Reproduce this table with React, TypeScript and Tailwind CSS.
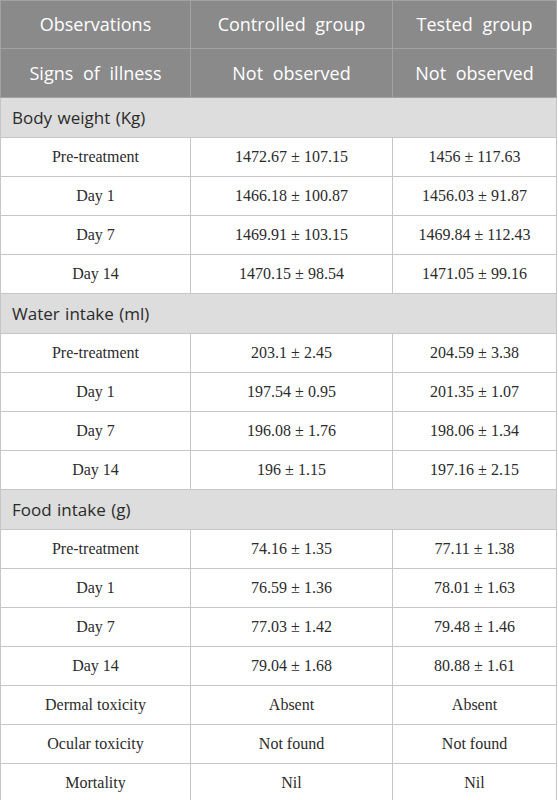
import React from "react";

type Row = { label: string; c: string; t: string };
type Section = { title: string; rows: Row[] };

const sections: Section[] = [
  {
    title: "Body weight (Kg)",
    rows: [
      { label: "Pre-treatment", c: "1472.67 ± 107.15", t: "1456 ± 117.63" },
      { label: "Day 1", c: "1466.18 ± 100.87", t: "1456.03 ± 91.87" },
      { label: "Day 7", c: "1469.91 ± 103.15", t: "1469.84 ± 112.43" },
      { label: "Day 14", c: "1470.15 ± 98.54", t: "1471.05 ± 99.16" },
    ],
  },
  {
    title: "Water intake (ml)",
    rows: [
      { label: "Pre-treatment", c: "203.1 ± 2.45", t: "204.59 ± 3.38" },
      { label: "Day 1", c: "197.54 ± 0.95", t: "201.35 ± 1.07" },
      { label: "Day 7", c: "196.08 ± 1.76", t: "198.06 ± 1.34" },
      { label: "Day 14", c: "196 ± 1.15", t: "197.16 ± 2.15" },
    ],
  },
  {
    title: "Food intake (g)",
    rows: [
      { label: "Pre-treatment", c: "74.16 ± 1.35", t: "77.11 ± 1.38" },
      { label: "Day 1", c: "76.59 ± 1.36", t: "78.01 ± 1.63" },
      { label: "Day 7", c: "77.03 ± 1.42", t: "79.48 ± 1.46" },
      { label: "Day 14", c: "79.04 ± 1.68", t: "80.88 ± 1.61" },
    ],
  },
];

const tail: Row[] = [
  { label: "Dermal toxicity", c: "Absent", t: "Absent" },
  { label: "Ocular toxicity", c: "Not found", t: "Not found" },
  { label: "Mortality", c: "Nil", t: "Nil" },
];

const sans = "font-['Open_Sans',sans-serif]";
const serif = "font-['Liberation_Serif',serif]";

function DataRow({ r }: { r: Row }) {
  const td =
    "border border-[#c6c6c6] h-[39px] p-0 text-center align-middle text-[16px] text-[#2b2b2b] " +
    serif;
  return (
    <tr>
      <td className={td}>{r.label}</td>
      <td className={td}>{r.c}</td>
      <td className={td}>{r.t}</td>
    </tr>
  );
}

export default function App() {
  const th =
    "border border-[#a2a2a2] h-[48px] p-0 text-center align-middle font-normal text-[18px] [word-spacing:5px] text-white bg-[#8a8a8a] " +
    sans;
  return (
    <div className="w-[558px] h-[800px] bg-white">
      <table className="w-[556px] border-collapse table-fixed">
        <colgroup>
          <col className="w-[190px]" />
          <col className="w-[202px]" />
          <col className="w-[164px]" />
        </colgroup>
        <thead>
          <tr>
            <th className={th}>Observations</th>
            <th className={th}>Controlled group</th>
            <th className={th}>Tested group</th>
          </tr>
          <tr>
            <th className={th + " h-[49px]"}>Signs of illness</th>
            <th className={th + " h-[49px]"}>Not observed</th>
            <th className={th + " h-[49px]"}>Not observed</th>
          </tr>
        </thead>
        <tbody>
          {sections.map((s) => (
            <React.Fragment key={s.title}>
              <tr>
                <td
                  colSpan={3}
                  className={
                    "border border-[#c6c6c6] h-[40px] p-0 pl-[11px] text-left align-middle bg-[#dcdddc] text-[17px] [word-spacing:1px] text-[#2b2b2b] " +
                    sans
                  }
                >
                  {s.title}
                </td>
              </tr>
              {s.rows.map((r) => (
                <DataRow key={s.title + r.label} r={r} />
              ))}
            </React.Fragment>
          ))}
          {tail.map((r) => (
            <DataRow key={r.label} r={r} />
          ))}
        </tbody>
      </table>
    </div>
  );
}
